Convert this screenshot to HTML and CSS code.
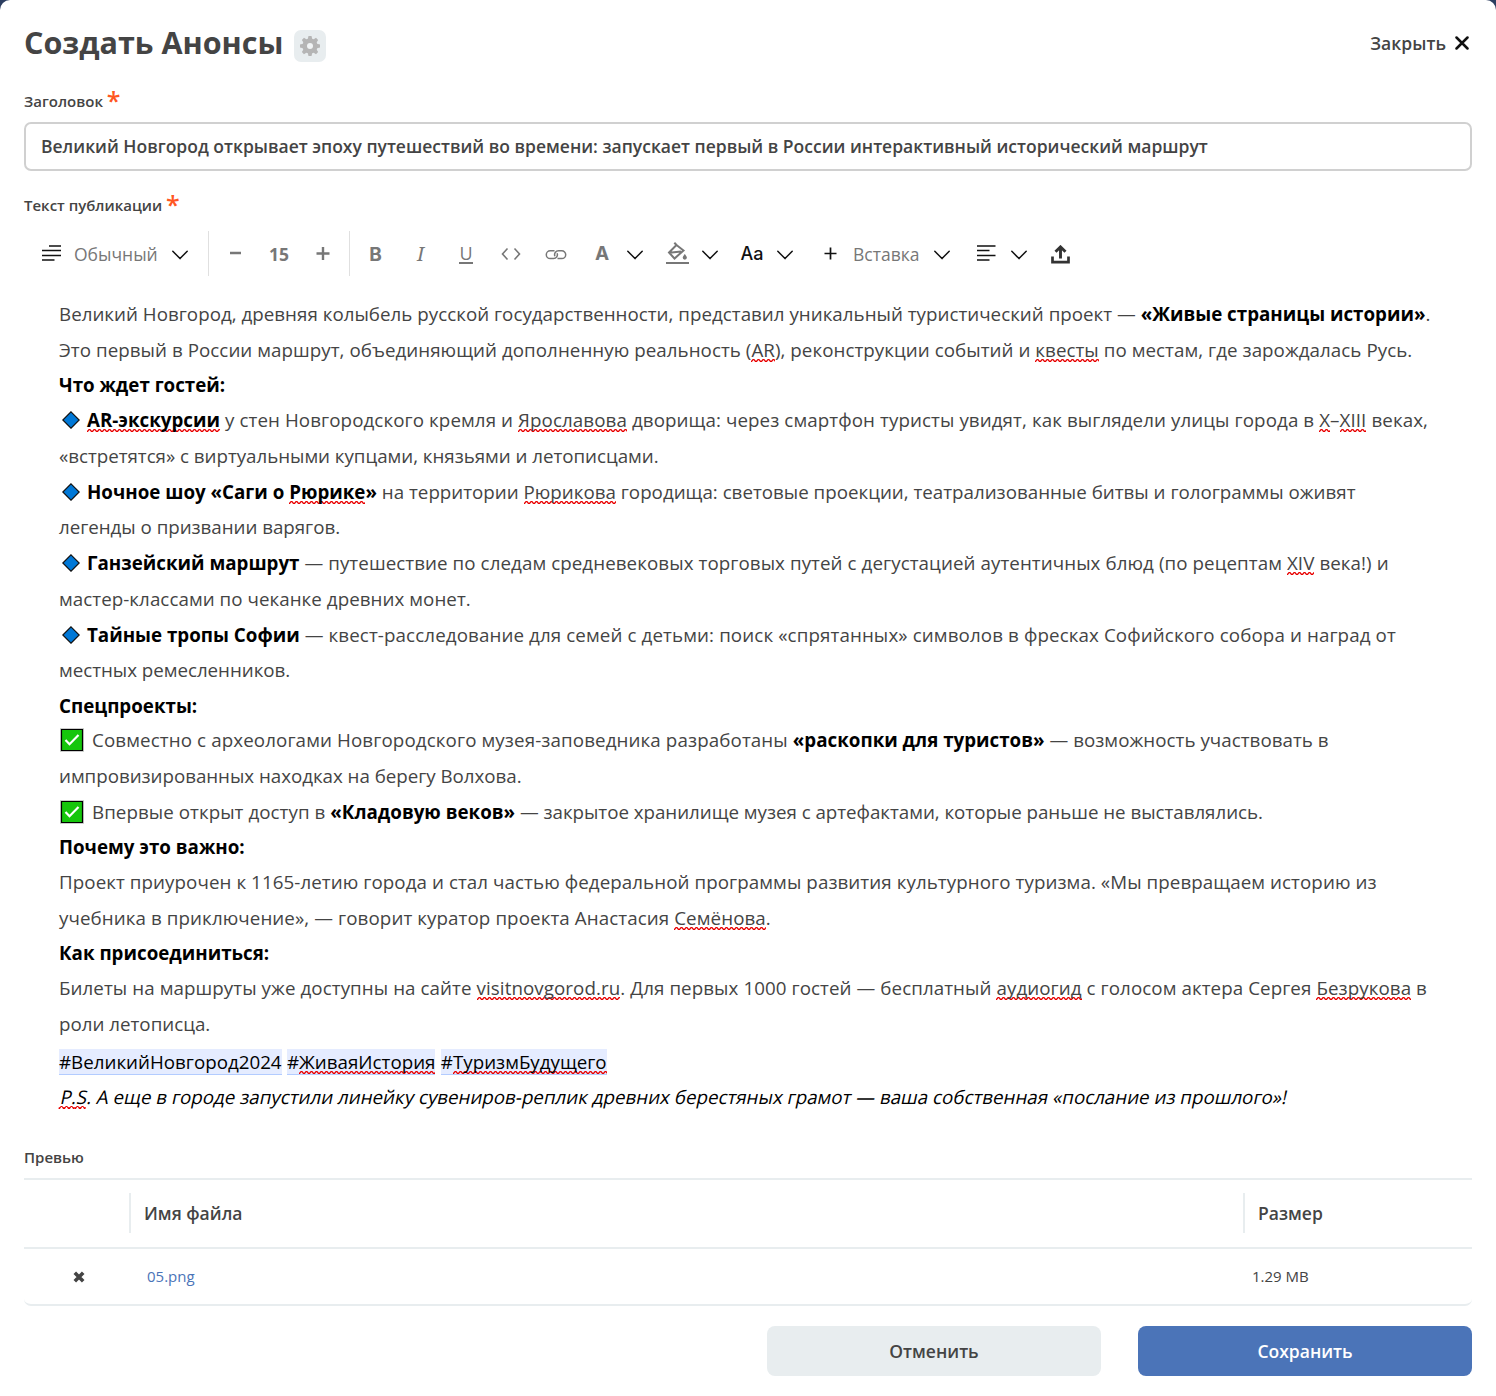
FILE: index.html
```html
<!DOCTYPE html>
<html lang="ru">
<head>
<meta charset="utf-8">
<title>Создать Анонсы</title>
<link rel="stylesheet" href="styles.css">
</head>
<body>
<svg class="defs" aria-hidden="true">
  <symbol id="chev" viewBox="0 0 16 10"><path d="M.8 1.200 8 8.600 15.200 1.200" fill="none" stroke="#111" stroke-width="1.500" stroke-linecap="round" stroke-linejoin="round"/></symbol>
  <symbol id="diamond" viewBox="0 0 18 18"><path d="M9 .8 17.200 9 9 17.200.8 9z" fill="#0078d7" stroke="#111" stroke-width="1.200"/></symbol>
  <symbol id="check" viewBox="0 0 24 24"><path d="M.5.5h23v23H.5z" fill="#16c60c" stroke="#ccc" stroke-width="1"/><path d="M1.500 1.500h21v21h-21z" fill="#16c60c" stroke="#000" stroke-width="1.200"/><path d="m5.500 12 4 4.200 9-9.200" fill="none" stroke="#fff" stroke-width="2.200"/></symbol>
</svg>
<main class="modal">
  <header class="head">
    <h1 class="title">Создать Анонсы</h1>
    <button class="gear" aria-label="Настройки"><svg width="20" height="20" viewBox="0 0 20 20"><g fill="#b5b5b5"><circle cx="10" cy="10" r="7.600"/><g id="teeth"><path d="M8.500 0h3l1 4h-5zM8.500 20h3l1-4h-5zM0 8.500v3l4 1v-5zM20 8.500v3l-4 1v-5z"/></g><use href="#teeth" transform="rotate(45 10 10)"/></g><circle cx="10" cy="10" r="3" fill="#f1f4f5"/></svg></button>
    <button class="close">Закрыть<svg width="14" height="14" viewBox="0 0 14 14"><path d="M1.500 1.500l11 11M12.500 1.500l-11 11" stroke="#111" stroke-width="2.500" stroke-linecap="round"/></svg></button>
  </header>
  <label class="label label-a">Заголовок <span class="req">*</span></label>
  <div class="input">Великий Новгород открывает эпоху путешествий во времени: запускает первый в России интерактивный исторический маршрут</div>
  <label class="label label-b">Текст публикации <span class="req">*</span></label>
  <div class="toolbar">
    <div class="group style">
      <svg width="19" height="17" viewBox="0 0 19 17"><path d="M7 1h12M0 5.500h19M0 10.500h19M0 15h12.500" stroke="#111" stroke-width="1.700"/></svg>
      <span class="t">Обычный</span>
      <svg class="chev"><use href="#chev"/></svg>
    </div>
    <div class="group size">
      <svg width="13" height="14" viewBox="0 0 13 14"><path d="M1 6h11" stroke="#777" stroke-width="2.400"/></svg>
      <b>15</b>
      <svg width="14" height="14" viewBox="0 0 14 14"><path d="M.5 6.500h13M7 0v13" stroke="#777" stroke-width="2.400"/></svg>
    </div>
    <div class="group marks">
      <b>B</b><i>I</i><u>U</u>
      <span><svg width="20" height="14" viewBox="0 0 20 14"><path d="M6.500 1.500 1.500 7l5 5.500M13.500 1.500l5 5.500-5 5.500" fill="none" stroke="#777" stroke-width="1.600"/></svg></span>
      <span><svg width="22" height="11" viewBox="-1 -1 22 11"><path d="M8.500.8H4.200a3.900 3.900 0 0 0 0 7.800h3.300a3.900 3.900 0 0 0 3.600-5.400M11.500 8.600h4.300a3.900 3.900 0 0 0 0-7.800h-3.300a3.900 3.900 0 0 0-3.600 5.400" fill="none" stroke="#777" stroke-width="1.500"/></svg></span>
    </div>
    <div class="pair"><span class="color">A</span><svg class="chev"><use href="#chev"/></svg></div>
    <div class="pair"><span><svg width="23" height="23" viewBox="0 0 23 23"><path d="M8.300.8l2.500 2.500M10.500 3 3 10.500l5.500 6 9-8zM3.500 10.800 15 9.500" fill="none" stroke="#777" stroke-width="2"/><path d="M18.800 12c1.400 1.900 2.100 2.800 2.100 3.600a2.100 2.100 0 0 1-4.200 0c0-.8.7-1.700 2.100-3.600z" fill="#777"/><path d="M.5 21h22" stroke="#777" stroke-width="2.200" stroke-linecap="round"/></svg></span><svg class="chev"><use href="#chev"/></svg></div>
    <div class="pair"><span class="case">Aa</span><svg class="chev"><use href="#chev"/></svg></div>
    <div class="insert"><svg width="15" height="14" viewBox="0 0 15 14"><path d="M1.500 6.500h12M7.500.5v12" stroke="#111" stroke-width="1.700"/></svg><span class="t">Вставка</span><svg class="chev"><use href="#chev"/></svg></div>
    <div class="align"><svg width="20" height="17" viewBox="0 0 20 17"><path d="M1 1h18.500M1 5.500h12.500M1 10.500h18.500M1 15h12.500" stroke="#111" stroke-width="1.700"/></svg><svg class="chev"><use href="#chev"/></svg></div>
    <svg class="upload" width="19" height="19" viewBox="0 0 19 19"><path d="M1.500 11.500v5.700h16v-5.700" fill="none" stroke="#333" stroke-width="2.700"/><path d="M9.500 13.500V3M4.500 6.800l5-4.900 5 4.900" fill="none" stroke="#333" stroke-width="2.900"/></svg>
  </div>
  <article class="editor">
    <p class="ln"><span class="w1">Великий Новгород, древняя колыбель русской государственности, представил уникальный туристический проект — </span><strong>«Живые страницы истории»</strong>.</p>
    <p class="ln s w3">Это первый в России маршрут, объединяющий дополненную реальность (<span class="sp">AR</span>), реконструкции событий и <span class="sp">квесты</span> по местам, где зарождалась Русь.</p>
    <p class="ln s"><strong>Что ждет гостей:</strong></p>
    <p class="ln w5"><svg class="dia"><use href="#diamond"/></svg><strong class="sp">AR-экскурсии</strong> у стен Новгородского кремля и <span class="sp">Ярославова</span> дворища: через смартфон туристы увидят, как выглядели улицы города в <span class="sp">X</span>–<span class="sp">XIII</span> веках,</p>
    <p class="ln n">«встретятся» с виртуальными купцами, князьями и летописцами.</p>
    <p class="ln s"><svg class="dia"><use href="#diamond"/></svg><strong>Ночное шоу «Саги о <span class="sp">Рюрике</span>»</strong> на территории <span class="sp">Рюрикова</span> городища: световые проекции, театрализованные битвы и голограммы оживят</p>
    <p class="ln n">легенды о призвании варягов.</p>
    <p class="ln w4"><svg class="dia"><use href="#diamond"/></svg><strong>Ганзейский маршрут</strong> — путешествие по следам средневековых торговых путей с дегустацией аутентичных блюд (по рецептам <span class="sp">XIV</span> века!) и</p>
    <p class="ln w3">мастер-классами по чеканке древних монет.</p>
    <p class="ln s w6"><svg class="dia"><use href="#diamond"/></svg><strong>Тайные тропы Софии</strong> — квест-расследование для семей с детьми: поиск «спрятанных» символов в фресках Софийского собора и наград от</p>
    <p class="ln n">местных ремесленников.</p>
    <p class="ln ss"><strong>Спецпроекты:</strong></p>
    <p class="ln"><svg class="chk"><use href="#check"/></svg><span class="w6">Совместно с археологами Новгородского музея-заповедника разработаны </span><strong>«раскопки для туристов»</strong><span class="w2"> — возможность участвовать в</span></p>
    <p class="ln n">импровизированных находках на берегу Волхова.</p>
    <p class="ln s"><svg class="chk"><use href="#check"/></svg><span class="w3">Впервые открыт доступ в </span><strong>«Кладовую веков»</strong><span class="n"> — закрытое хранилище музея с артефактами, которые раньше не выставлялись.</span></p>
    <p class="ln s"><strong>Почему это важно:</strong></p>
    <p class="ln w4">Проект приурочен к 1165-летию города и стал частью федеральной программы развития культурного туризма. «Мы превращаем историю из</p>
    <p class="ln s w5">учебника в приключение», — говорит куратор проекта Анастасия <span class="sp">Семёнова</span>.</p>
    <p class="ln s"><strong>Как присоединиться:</strong></p>
    <p class="ln w4">Билеты на маршруты уже доступны на сайте <span class="sp">visitnovgorod.ru</span>. Для первых 1000 гостей — бесплатный <span class="sp">аудиогид</span> с голосом актера Сергея <span class="sp">Безрукова</span> в</p>
    <p class="ln gap">роли летописца.</p>
    <p class="ln s tags"><span class="tag">#ВеликийНовгород2024</span> <span class="tag">#<span class="sp">ЖиваяИстория</span></span> <span class="tag">#<span class="sp">ТуризмБудущего</span></span></p>
    <p class="ln ps"><span class="slant"><span class="sp">P.</span><span class="sp">S</span>. А еще в городе запустили линейку сувениров-реплик древних берестяных грамот — ваша собственная «послание из прошлого»!</span></p>
  </article>
  <div class="label label-c">Превью</div>
  <div class="files">
    <div class="row th"><span></span><span class="cell">Имя файла</span><span class="cell">Размер</span></div>
    <div class="row td"><span class="del"><svg width="12" height="12" viewBox="0 0 12 12"><path d="M1.800 1.800l8.400 8.400M10.200 1.800l-8.400 8.400" stroke="#444" stroke-width="3.600"/></svg></span><a class="name">05.png</a><span class="bytes">1.29 MB</span></div>
  </div>
  <footer class="actions"><button class="btn">Отменить</button><button class="btn primary">Сохранить</button></footer>
</main>
</body>
</html>
```
FILE: styles.css
```css
* { box-sizing: border-box; }
body { margin: 0; background: #2c3e60; font-family: "Open Sans", "Noto Sans", sans-serif; color: #444; }
button { border: 0; padding: 0; font: inherit; color: inherit; background: none; }
.defs { display: none; }
.modal { height: 1396px; padding: 0 24px; background: #fff; border-radius: 10px 10px 0 0; overflow: hidden; }

.head { display: flex; align-items: flex-start; height: 91px; }
.title { margin: 22px 0 0; font-size: 30.5px; line-height: 41px; font-weight: 700; }
.gear { display: grid; place-items: center; width: 32px; height: 32px; margin: 30px 0 0 11px; border-radius: 7px; background: #e8edef; }
.close { display: flex; align-items: center; gap: 9px; margin: 31px 3px 0 auto; font-size: 17.5px; line-height: 24px; font-weight: 600; letter-spacing: .05px; }

.label { display: block; font-size: 15px; line-height: 20px; height: 31px; font-weight: 600; }
.req { font-size: 25px; line-height: 10px; color: #ff5722; vertical-align: -3px; font-weight: 600; }
.label-a .req, .label-b .req { display: inline-block; height: 10px; }
.input { height: 49px; padding: 0 15px; border: 2px solid #d0d0d0; border-radius: 7px; font-size: 17.5px; line-height: 44px; font-weight: 600; white-space: nowrap; }
.label-b { margin-top: 24px; height: 36px; }

.toolbar { display: flex; height: 45px; align-items: stretch; color: #777; font-size: 17.5px; }
.toolbar > *, .group > *, .pair > * { flex: none; }
.chev { width: 16px; height: 10px; margin-top: 3px; }
.group, .pair, .insert, .align { display: flex; align-items: center; }
.style { width: 185px; padding-left: 18px; border-right: 1px solid #e0e0e0; }
.style .t { margin: 0 14px 0 13px; width: 84px; }
.size { width: 141px; padding: 0 4px; border-right: 1px solid #e0e0e0; display: grid; grid-template-columns: repeat(3, 44px); place-items: center; }
.marks { padding-left: 3px; display: grid; grid-template-columns: repeat(5, 45px); place-items: center; }
.marks b { font: 700 19px/24px Inter, sans-serif; margin-top: 2px; }
.marks i { font: italic 400 19.5px/24px "Noto Serif", "Liberation Serif", serif; }
.marks u { font: 400 18px/16px "Open Sans", sans-serif; text-decoration: none; border-bottom: 2px solid #777; height: 19px; margin: 2px 0 0 1px; }
.marks svg { display: block; margin-top: 1px; }
.pair { width: 75px; }
.pair span { width: 48px; margin-right: 1px; display: grid; place-items: center; }
.pair .color { font: 700 19px/24px Inter, sans-serif; margin-top: 1px; }
.case { font: 500 18px/24px Inter, sans-serif; color: #111; }
.insert { padding-left: 20px; }
.insert .t { margin: 0 14px 0 15px; width: 67px; }
.align { padding-left: 26px; gap: 15px; }
.upload { margin: 14px 0 0 24px; }

.editor { height: 871px; padding: 20px 35px 0; font-size: 18.75px; line-height: 36px; }
.ln { margin: 0; height: 36px; white-space: nowrap; }
.ln.s { height: 35px; }
.ln.ss { height: 34px; }
.ln.gap { height: 38px; }
/* tracking steps that keep each line at its measure */
.n { letter-spacing: -.03px; }
.w1 { letter-spacing: .018px; }
.w2 { letter-spacing: .04px; }
.w3 { letter-spacing: .05px; }
.w4 { letter-spacing: .075px; }
.w5 { letter-spacing: .088px; }
.w6 { letter-spacing: .11px; }
.ln strong { color: #000; font-weight: 700; letter-spacing: 0; }
.sp { background: url("data:image/svg+xml,%3Csvg xmlns='http://www.w3.org/2000/svg' width='5' height='3'%3E%3Cpath d='M-.5 2.500h1L2 .7h1L4.500 2.500h1' fill='none' stroke='%23e80000' stroke-width='1.300'/%3E%3C/svg%3E") repeat-x 0 100%; }
.dia { width: 18px; height: 18px; margin: 0 7.5px 0 2.5px; vertical-align: -2px; }
.chk { width: 24px; height: 24px; margin: 0 8px 0 1px; vertical-align: -5px; }
.tags, .ps { color: #000; }
.tags { word-spacing: .5px; }
.tag { background: #e5ecff; border-bottom: 1px solid #b3ccff; }
.slant { display: inline-block; margin-left: 2px; transform: skewX(-12deg); }

.label-c { height: 31px; }
.files { border-top: 2px solid #e8edef; border-bottom: 2px solid #e8edef; border-radius: 0 0 7px 7px; }
.row { display: grid; grid-template-columns: 105px 1114px 1fr; align-items: center; }
.th { height: 69px; padding-bottom: 1px; border-bottom: 2px solid #e8edef; font-size: 17.5px; font-weight: 600; }
.th .cell { height: 40px; line-height: 40px; padding-left: 13px; border-left: 2px solid #e8edef; }
.td { height: 55px; font-size: 15px; }
.del { padding-left: 49px; display: flex; }
.name { padding: 0 0 2px 18px; color: #4b74b8; }
.bytes { padding: 0 0 2px 9px; }
.actions { display: flex; justify-content: flex-end; gap: 37px; margin-top: 20px; }
.btn { width: 334px; height: 50px; border-radius: 8px; background: #e8edef; font-size: 17.5px; font-weight: 600; }
.primary { background: #4b74b8; color: #fff; }
```
